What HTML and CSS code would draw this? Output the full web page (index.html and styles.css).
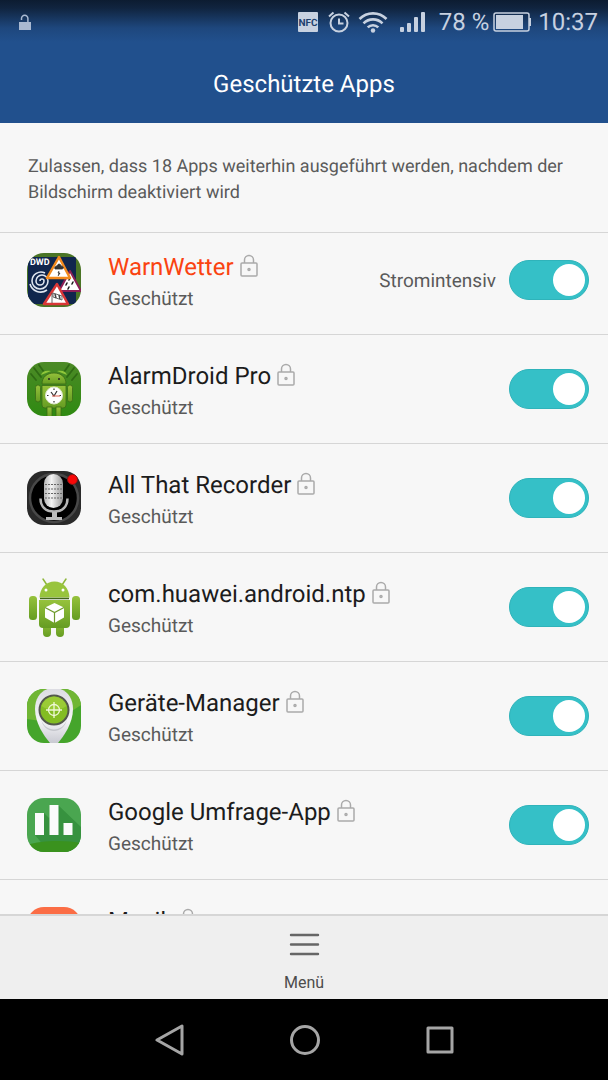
FILE: index.html
```html
<!DOCTYPE html>
<html lang="de">
<head>
    <meta charset="UTF-8">
    <meta name="viewport" content="width=device-width, initial-scale=1.0">
    <title>Geschützte Apps</title>
    <link rel="stylesheet" href="styles.css">
</head>
<body>
<svg class="defs" aria-hidden="true">
    <symbol id="lock" viewBox="0 0 18 23">
        <rect x="1" y="9" width="16" height="13" rx="1"/>
        <path d="M4.500 9V6a4.500 4.500 0 0 1 9 0v3"/>
        <circle cx="9" cy="15.500" r="1"/>
    </symbol>
    <clipPath id="tile"><rect width="54" height="54" rx="17"/></clipPath>
    <linearGradient id="leaf" x1="0" y1="0" x2="0" y2="1">
        <stop offset="0" stop-color="#4c8a26"/>
        <stop offset="1" stop-color="#2f8a12"/>
    </linearGradient>
    <linearGradient id="droid" x1="0" y1="0" x2="0" y2="1">
        <stop offset="0" stop-color="#96c23c"/>
        <stop offset="1" stop-color="#659c22"/>
    </linearGradient>
    <linearGradient id="silver" x1="0" y1="0" x2="1" y2="0">
        <stop offset="0" stop-color="#b5b5b5"/>
        <stop offset="0.4" stop-color="#f4f4f4"/>
        <stop offset="1" stop-color="#999"/>
    </linearGradient>
    <linearGradient id="pin" x1="0" y1="0" x2="0" y2="1">
        <stop offset="0" stop-color="#dcdce2"/>
        <stop offset="0.6" stop-color="#f4f4f6"/>
        <stop offset="1" stop-color="#c9cad2"/>
    </linearGradient>
</svg>

<header class="header">
    <div class="status-bar">
        <svg class="unlocked" width="14" height="17" viewBox="0 0 14 17">
            <path d="M3.500 6V4.500a3.200 3.200 0 0 1 6.400 0V9" fill="none" stroke="currentColor" stroke-width="1.500"/>
            <rect x="1" y="8" width="12" height="8" fill="currentColor"/>
        </svg>
        <svg class="nfc" width="20" height="20" viewBox="0 0 20 20">
            <rect width="20" height="20" rx="1" fill="currentColor"/>
            <text x="10" y="14" text-anchor="middle">NFC</text>
        </svg>
        <svg class="alarm" width="22" height="22" viewBox="0 0 22 22" fill="none" stroke="currentColor" stroke-width="2">
            <circle cx="11" cy="12" r="8.500"/>
            <path d="M11 7.500v5h4.500M1 5.500l4.500-4M21 5.500l-4.500-4"/>
        </svg>
        <svg class="wifi" width="30" height="22" viewBox="0 0 30 22" fill="none" stroke="currentColor" stroke-width="2.600">
            <path d="M1.500 8a19 19 0 0 1 27 0M5.500 12.300a13.500 13.500 0 0 1 19 0M9.700 16.400a7.600 7.600 0 0 1 10.600 0"/>
            <circle cx="15" cy="19.500" r="2.200" fill="currentColor" stroke="none"/>
        </svg>
        <svg class="signal" width="25" height="22" viewBox="0 0 25 22" fill="currentColor">
            <rect x="0" y="16" width="4" height="5" rx="1"/>
            <rect x="7" y="12" width="4" height="9" rx="1"/>
            <rect x="14" y="6" width="4" height="15" rx="1"/>
            <rect x="21" y="1" width="4" height="20" rx="1"/>
        </svg>
        <span class="percent">78 %</span>
        <svg class="battery" width="38" height="20" viewBox="0 0 38 20">
            <rect x="1" y="1" width="35" height="18" rx="2" fill="none" stroke="currentColor" stroke-width="1.500"/>
            <rect x="3" y="3" width="27" height="14" fill="currentColor"/>
            <rect x="36" y="6" width="2" height="8" fill="currentColor"/>
        </svg>
        <time class="clock">10:37</time>
    </div>
    <h1 class="title">Geschützte Apps</h1>
</header>

<main class="content">
    <p class="intro">Zulassen, dass 18 Apps weiterhin ausgeführt werden, nachdem der Bildschirm deaktiviert wird</p>

    <ul class="app-list">
        <li class="app">
            <svg class="app-icon" viewBox="0 0 54 54">
                <g clip-path="url(#tile)">
                    <rect width="54" height="54" fill="#4a7425"/>
                    <rect x="1" y="4" width="48" height="47" fill="#10264d"/>
                    <path d="M13 28a2 2 0 0 1 4 0a4 4 0 0 1-8 0a6 6 0 0 1 12 0a8 8 0 0 1-16 0a9 9 0 0 1 13-8M3 31a11 11 0 0 0 17 6" fill="none" stroke="#dfe6f0" stroke-width="1.600"/>
                    <text class="dwd" x="3" y="12">DWD</text>
                    <path d="M43 18l11 20H32z" fill="#fff" stroke="#8c1f55" stroke-width="2" stroke-linejoin="round"/>
                    <path d="M43 25l-1 2M46 29l-1 2M40 30l-1 2M42 34l-1 2" stroke="#222" stroke-width="1.600" stroke-linecap="round"/>
                    <path d="M32 4l11 21H20z" fill="#fff" stroke="#f28a1e" stroke-width="2.500" stroke-linejoin="round"/>
                    <path d="M28 16c-1-2 1-3 2-3 1-3 4-2 4 0 3 0 3 3 1 3h-7zM32 18l-1 2h2l-2 3" fill="#333" stroke="#333" stroke-width="0.800"/>
                    <path d="M30 31l11 20H17z" fill="#fff" stroke="#d93636" stroke-width="2.500" stroke-linejoin="round"/>
                    <path d="M25 50V40M26 40l9 3v4l-9-3z" fill="none" stroke="#444" stroke-width="0.800"/>
                    <path d="M28 41l1 4M32 42l1 4" stroke="#444" stroke-width="1.500"/>
                </g>
            </svg>
            <div class="app-text">
                <label class="app-name warn" for="app-warnwetter">WarnWetter <svg class="lock"><use href="#lock"/></svg></label>
                <span class="app-state">Geschützt</span>
            </div>
            <span class="app-note">Stromintensiv</span>
            <input class="switch" type="checkbox" id="app-warnwetter" checked>
        </li>
        <li class="app">
            <svg class="app-icon" viewBox="0 0 54 54">
                <g clip-path="url(#tile)">
                    <rect width="54" height="54" fill="url(#leaf)"/>
                    <path d="M4 12l5 6M7 6l7 9M12 3l5 7M50 12l-5 6M47 6l-7 9M42 3l-5 7" stroke="#2f6a14" stroke-width="1.800" stroke-linecap="round"/>
                    <path d="M14 13c1-4 5-5 10-4zM40 13c-1-4-5-5-10-4z" fill="#8fc63a"/>
                    <g fill="url(#droid)" stroke="#3a6b16" stroke-width="0.800">
                        <path d="M15 22c0-7 5-11 12-11s12 4 12 11z"/>
                        <path d="M15 23.500h24V43a3 3 0 0 1-3 3H18a3 3 0 0 1-3-3z"/>
                        <rect x="8.500" y="23" width="5" height="17" rx="2.500"/>
                        <rect x="40.500" y="23" width="5" height="17" rx="2.500"/>
                        <rect x="20" y="45" width="5" height="11"/>
                        <rect x="29" y="45" width="5" height="11"/>
                    </g>
                    <circle cx="22" cy="17" r="1" fill="#222"/>
                    <circle cx="32" cy="17" r="1" fill="#222"/>
                    <circle cx="27" cy="33.500" r="8.500" fill="#fff" stroke="#dfe8d2"/>
                    <path d="M27 26.500v1.500M27 39v1.500M20 33.500h1.500M32.500 33.500H34M24 30l3 4 3-5" fill="none" stroke="#333" stroke-width="1.200"/>
                    <path d="M25 34h8" stroke="#e06050" stroke-width="1"/>
                </g>
            </svg>
            <div class="app-text">
                <label class="app-name" for="app-alarmdroid">AlarmDroid Pro <svg class="lock"><use href="#lock"/></svg></label>
                <span class="app-state">Geschützt</span>
            </div>
            <input class="switch" type="checkbox" id="app-alarmdroid" checked>
        </li>
        <li class="app">
            <svg class="app-icon" viewBox="0 0 54 54">
                <g clip-path="url(#tile)">
                    <rect width="54" height="54" fill="#2a2a2a"/>
                    <circle cx="27" cy="27" r="24" fill="#000" stroke="#484848" stroke-width="2.500"/>
                    <path d="M13.500 27.500c0 8 5 13 13.500 13s13.500-5 13.500-13" fill="none" stroke="#b5b5b5" stroke-width="2.500"/>
                    <path d="M25 41h5v5h5v3H19v-3h6z" fill="#bdbdbd"/>
                    <rect x="17" y="3" width="19" height="34" rx="9.500" fill="url(#silver)"/>
                    <path d="M18 13.500h17M18 18h17M18 22.500h17M18 27h17" stroke="#666" stroke-width="1.200" stroke-dasharray="2 1"/>
                </g>
                <circle cx="45.500" cy="8.500" r="5" fill="#f80808" stroke="#7d1717"/>
            </svg>
            <div class="app-text">
                <label class="app-name" for="app-recorder">All That Recorder <svg class="lock"><use href="#lock"/></svg></label>
                <span class="app-state">Geschützt</span>
            </div>
            <input class="switch" type="checkbox" id="app-recorder" checked>
        </li>
        <li class="app">
            <svg class="app-icon" viewBox="0 0 54 54">
                <path d="M16-1l4 6M39-1l-4 6" stroke="#8db63a" stroke-width="1.500" stroke-linecap="round"/>
                <g fill="url(#droid)">
                    <rect x="16" y="40" width="8" height="17" rx="4"/>
                    <rect x="29" y="40" width="8" height="17" rx="4"/>
                    <rect x="2" y="16" width="8" height="24" rx="3.500"/>
                    <rect x="45" y="16" width="8" height="24" rx="3.500"/>
                    <path d="M12 20h31v24a4 4 0 0 1-4 4H16a4 4 0 0 1-4-4z"/>
                </g>
                <path d="M12.500 17.500C13 8 19 1.500 27.500 1.500S42 8 42.500 17.500z" fill="#98c43d"/>
                <path d="M13 18.500h29" stroke="#42661a" stroke-width="1.500"/>
                <circle cx="19" cy="10" r="1.500" fill="#fff"/>
                <circle cx="36" cy="10" r="1.500" fill="#fff"/>
                <path d="M27.500 23l9.500 4.500v10L27.500 43 18 37.500v-10z" fill="#fff"/>
                <path d="M18 27.500l9.500 5 9.500-5M27.500 32.500V43" fill="none" stroke="#6e9a2c" stroke-width="1.200"/>
            </svg>
            <div class="app-text">
                <label class="app-name" for="app-ntp">com.huawei.android.ntp <svg class="lock"><use href="#lock"/></svg></label>
                <span class="app-state">Geschützt</span>
            </div>
            <input class="switch" type="checkbox" id="app-ntp" checked>
        </li>
        <li class="app">
            <svg class="app-icon" viewBox="0 0 54 54">
                <g clip-path="url(#tile)">
                    <rect width="54" height="54" fill="#45a52b"/>
                    <path d="M0 0h54v16L27 34 0 30z" fill="#70b634"/>
                    <path d="M27-1C15-1 8 8 8 20c0 14 9 27 15 34h8c6-7 15-20 15-34C46 8 39-1 27-1z" fill="url(#pin)"/>
                    <path d="M14 30c4 14 22 14 26 0-3 16-23 16-26 0z" fill="#c4c6cc"/>
                    <circle cx="27" cy="21" r="14.500" fill="#83bd23" stroke="#53584c" stroke-width="2"/>
                    <path d="M14.500 17a13 13 0 0 1 25 0c-7 5-18 5-25 0z" fill="#9acb36"/>
                    <circle cx="27" cy="21" r="5.500" fill="none" stroke="#f0f8d8" stroke-width="1.300"/>
                    <path d="M27 13v16M19 21h16" stroke="#f0f8d8" stroke-width="1.300"/>
                </g>
            </svg>
            <div class="app-text">
                <label class="app-name" for="app-geraete">Geräte-Manager <svg class="lock"><use href="#lock"/></svg></label>
                <span class="app-state">Geschützt</span>
            </div>
            <input class="switch" type="checkbox" id="app-geraete" checked>
        </li>
        <li class="app">
            <svg class="app-icon" viewBox="0 0 54 54">
                <g clip-path="url(#tile)">
                    <rect width="54" height="54" fill="#4aa650"/>
                    <path d="M31 7l23 22v25H22l-14-17 9-22 5 5z" fill="#37923f"/>
                    <path d="M0 47c14-5 40-5 54-2v9H0z" fill="#3a921e"/>
                    <path d="M8 15h9v22H8zM22.500 7h9v30h-9zM36.500 25h9v12h-9z" fill="#fbfbfb"/>
                </g>
            </svg>
            <div class="app-text">
                <label class="app-name" for="app-umfrage">Google Umfrage-App <svg class="lock"><use href="#lock"/></svg></label>
                <span class="app-state">Geschützt</span>
            </div>
            <input class="switch" type="checkbox" id="app-umfrage" checked>
        </li>
        <li class="app">
            <svg class="app-icon" viewBox="0 0 54 54">
                <rect width="54" height="54" rx="17" fill="#fb6d45"/>
            </svg>
            <div class="app-text">
                <label class="app-name" for="app-musik">Musik <svg class="lock"><use href="#lock"/></svg></label>
                <span class="app-state">Geschützt</span>
            </div>
            <input class="switch" type="checkbox" id="app-musik" checked>
        </li>
    </ul>
</main>

<footer class="toolbar">
    <button class="menu-button" type="button">
        <svg width="32" height="24" viewBox="0 0 32 24" stroke="#666" stroke-width="2.400" stroke-linecap="round">
            <path d="M3 2h27M3 11.500h27M3 21h27"/>
        </svg>
        Menü
    </button>
</footer>

<nav class="nav-bar">
    <button class="nav-button" type="button" aria-label="Zurück">
        <svg width="32" height="32" viewBox="0 0 32 32"><path d="M29 2v28L4 16z"/></svg>
    </button>
    <button class="nav-button" type="button" aria-label="Startseite">
        <svg width="32" height="32" viewBox="0 0 32 32"><circle cx="17" cy="16" r="13.500"/></svg>
    </button>
    <button class="nav-button" type="button" aria-label="Übersicht">
        <svg width="32" height="32" viewBox="0 0 32 32"><rect x="5" y="4" width="24" height="24"/></svg>
    </button>
</nav>
</body>
</html>
```
FILE: styles.css
```css
:root {
    --color-header: #21508d;
    --color-background: #f7f7f7;
    --color-text: #1c1c1c;
    --color-text-light: #5a5a5a;
    --color-border: #d6d6d6;
    --color-switch: #35c0c7;
    --color-warn: #fa4310;
    --color-status: #c7d1e0;
}

* {
    box-sizing: border-box;
    margin: 0;
    padding: 0;
}

body {
    font-family: Roboto, "Noto Sans", sans-serif;
    text-rendering: geometricPrecision;
    color: var(--color-text);
    background-color: var(--color-background);
    display: flex;
    flex-direction: column;
    height: 100vh;
    overflow: hidden;
}

button {
    font: inherit;
    border: 0;
    background: none;
}

.defs {
    position: absolute;
    width: 0;
    height: 0;
}

/* Header */
.header {
    flex: none;
    color: #fff;
    background: linear-gradient(#0c1c31 0, #10243f 8px, #1e477d 28px, var(--color-header) 42px);
}

.status-bar {
    display: flex;
    align-items: center;
    height: 44px;
    padding: 0 10px 0 18px;
    font-size: 24px;
    color: var(--color-status);
}

.unlocked {
    margin-right: auto;
    color: #a9b9d1;
}

.nfc text {
    font-size: 10px;
    font-weight: 700;
    fill: #1e3f6d;
}

.alarm {
    margin-left: 10px;
}

.wifi {
    margin-left: 8px;
}

.signal {
    margin-left: 12px;
}

.percent {
    margin-left: 14px;
}

.battery {
    margin-left: 4px;
}

.clock {
    margin-left: 7px;
}

.title {
    padding-top: 1px;
    font-size: 24px;
    font-weight: 400;
    line-height: 78px;
    text-align: center;
}

/* App list */
.content {
    flex: 1;
    min-height: 0;
    display: flex;
    flex-direction: column;
}

.intro {
    flex: none;
    padding: 31px 28px 26px;
    border-bottom: 1px solid var(--color-border);
    font-size: 18px;
    line-height: 26px;
    color: var(--color-text-light);
}

.app-list {
    flex: 1;
    min-height: 0;
    overflow: hidden;
    list-style: none;
}

.app {
    display: flex;
    align-items: center;
    padding: 21px 19px 21px 27px;
    border-bottom: 1px solid var(--color-border);
}

.app:first-child {
    padding-top: 14px;
}

.app-icon {
    flex: none;
    width: 54px;
    height: 54px;
    margin-right: 27px;
    overflow: visible;
}

.dwd {
    font-size: 9px;
    font-weight: 700;
    fill: #fff;
}

.app-text {
    flex: 1;
    display: flex;
    flex-direction: column;
    padding-top: 2px;
}

.app-name {
    display: flex;
    align-items: center;
    gap: 6px;
    font-size: 24px;
    line-height: 36px;
}

.app-name.warn {
    color: var(--color-warn);
}

.lock {
    width: 18px;
    height: 23px;
    margin-bottom: 3px;
    fill: none;
    stroke: #aaa;
    stroke-width: 1.500;
}

.app-state,
.app-note {
    font-size: 19px;
    line-height: 28px;
    color: var(--color-text-light);
}

.app-note {
    padding-top: 2px;
    margin-right: 13px;
}

.switch {
    appearance: none;
    flex: none;
    display: flex;
    align-items: center;
    width: 80px;
    height: 40px;
    padding: 0 3px;
    border: 1px solid #2fb3ba;
    border-radius: 20px;
    background-color: #bbb;
}

.switch::before {
    content: "";
    width: 32px;
    height: 32px;
    border-radius: 50%;
    background-color: #fff;
}

.switch:checked {
    justify-content: flex-end;
    background-color: var(--color-switch);
}

/* Bottom bars */
.toolbar {
    flex: none;
    display: flex;
    justify-content: center;
    height: 85px;
    border-top: 2px solid var(--color-border);
    background-color: #efefef;
}

.menu-button {
    display: flex;
    flex-direction: column;
    align-items: center;
    gap: 16px;
    padding: 17px 24px 0;
    font-size: 16px;
    line-height: 20px;
    color: #4c4c4c;
}

.nav-bar {
    flex: none;
    display: flex;
    justify-content: center;
    height: 81px;
    background-color: #000;
}

.nav-button {
    width: 135px;
}

.nav-button svg {
    display: block;
    margin: 0 auto;
    fill: none;
    stroke: #a5a5a5;
    stroke-width: 3;
    stroke-linejoin: round;
}
```
